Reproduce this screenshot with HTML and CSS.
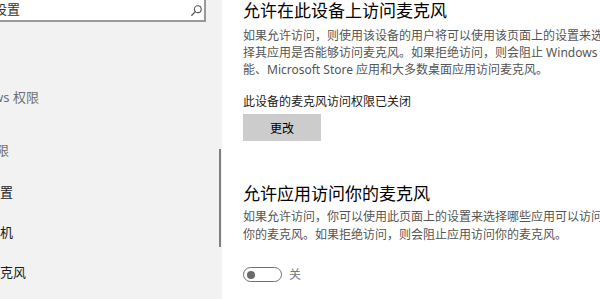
FILE: index.html
```html
<!DOCTYPE html>
<html lang="zh-CN">
<head>
<meta charset="utf-8">
<title>麦克风</title>
<link rel="stylesheet" href="styles.css">
</head>
<body>
<div class="window">
  <aside class="sidebar">
    <div class="search">
      <span class="search-text">设置</span>
      <svg class="search-icon" width="11" height="11" viewBox="0 0 11 11" aria-hidden="true">
        <circle cx="6.8" cy="4.2" r="3.4" fill="none" stroke="#555" stroke-width="1.1"/>
        <line x1="4.4" y1="6.6" x2="0.8" y2="10.2" stroke="#555" stroke-width="1.3" stroke-linecap="round"/>
      </svg>
    </div>
    <div class="group-title first">Windows 权限</div>
    <div class="group-title second">应用权限</div>
    <nav class="nav">
      <div class="nav-item">位置</div>
      <div class="nav-item">相机</div>
      <div class="nav-item">麦克风</div>
    </nav>
    <div class="scrollbar"></div>
  </aside>
  <main class="content">
    <h2 class="title">允许在此设备上访问麦克风</h2>
    <p class="desc">如果允许访问，则使用该设备的用户将可以使用该页面上的设置来选择<br>择其应用是否能够访问麦克风。如果拒绝访问，则会阻止 Windows 功<br>能、Microsoft Store 应用和大多数桌面应用访问麦克风。</p>
    <p class="status">此设备的麦克风访问权限已关闭</p>
    <button class="btn">更改</button>
    <h2 class="title second">允许应用访问你的麦克风</h2>
    <p class="desc desc2">如果允许访问，你可以使用此页面上的设置来选择哪些应用可以访问<br>你的麦克风。如果拒绝访问，则会阻止应用访问你的麦克风。</p>
    <div class="toggle-row">
      <span class="toggle"><span class="knob"></span></span>
      <span class="toggle-label">关</span>
    </div>
  </main>
</div>
</body>
</html>
```

FILE: styles.css
```css
* { box-sizing: border-box; }

html, body {
  margin: 0;
  padding: 0;
  width: 600px;
  height: 299px;
  overflow: hidden;
  background: #ffffff;
  font-family: "Noto Sans", "Noto Sans CJK SC", sans-serif;
}

.window {
  display: flex;
  width: 600px;
  height: 299px;
}

.sidebar {
  position: relative;
  flex: 0 0 222px;
  background: #f2f2f2;
  display: flex;
  flex-direction: column;
  overflow: hidden;
}

.search {
  margin-top: -2px;
  margin-left: -20px;
  width: 226px;
  height: 24px;
  flex: 0 0 24px;
  border: 2px solid #999999;
  background: #ffffff;
  display: flex;
  align-items: center;
  justify-content: space-between;
  padding: 0 2px 2px 12px;
}

.search-text {
  font-size: 13px;
  line-height: 16px;
  color: #333333;
  white-space: nowrap;
}

.search-icon {
  display: block;
  margin-top: 2px;
}

.group-title {
  margin-left: -46px;
  font-size: 13px;
  line-height: 20px;
  color: #707070;
  white-space: nowrap;
}

.group-title.first { margin-top: 65px; }
.group-title.second { margin-top: 33px; margin-left: -43px; }

.nav {
  margin-top: 12px;
  display: flex;
  flex-direction: column;
}

.nav-item {
  margin-left: -13px;
  height: 40px;
  line-height: 40px;
  font-size: 13px;
  color: #1a1a1a;
  white-space: nowrap;
}

.scrollbar {
  position: absolute;
  left: 219px;
  top: 149px;
  width: 2px;
  height: 98px;
  background: #808080;
}

.content {
  flex: 1;
  padding-left: 21px;
  overflow: hidden;
  display: flex;
  flex-direction: column;
  align-items: flex-start;
}

.title {
  margin: 0;
  font-size: 17px;
  line-height: 22px;
  font-weight: 400;
  color: #000000;
  white-space: nowrap;
}

.desc {
  margin: 5px 0 0;
  font-size: 12px;
  line-height: 17px;
  color: #555555;
  white-space: nowrap;
}

.status {
  margin: 15px 0 0;
  font-size: 12px;
  line-height: 17px;
  color: #1a1a1a;
  white-space: nowrap;
}

.btn {
  margin-top: 4px;
  width: 78px;
  height: 27px;
  border: none;
  background: #cccccc;
  font-family: inherit;
  font-size: 12px;
  color: #000000;
  padding: 0;
}

.title.second { margin-top: 42px; }

.desc2 { margin-top: 3px; line-height: 18px; }

.toggle-row {
  margin-top: 23px;
  display: flex;
  align-items: center;
  gap: 7px;
}

.toggle {
  width: 39px;
  height: 15px;
  border: 1.5px solid #707070;
  border-radius: 8px;
  display: flex;
  align-items: center;
  padding-left: 3px;
}

.knob {
  width: 8px;
  height: 8px;
  border-radius: 50%;
  background: #6a6a6a;
}

.toggle-label {
  font-size: 12px;
  line-height: 15px;
  color: #777777;
}
```
